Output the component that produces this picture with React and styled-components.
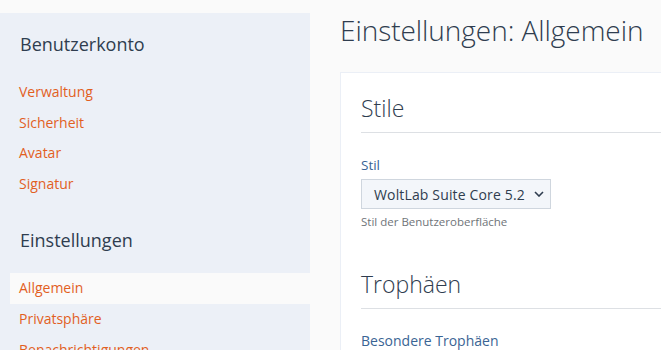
import React from "react";
import styled, { createGlobalStyle } from "styled-components";

const Global = createGlobalStyle`
  html, body { margin: 0; padding: 0; }
  body {
    background: #fafafa;
    font-family: "Open Sans", "Noto Sans", sans-serif;
    overflow: hidden;
    width: 661px;
    height: 350px;
  }
`;

const Page = styled.div`
  display: flex;
  align-items: flex-start;
  padding-top: 13px;
  width: 800px;
`;

const Sidebar = styled.aside`
  width: 310px;
  flex: none;
  background: #ecf0f7;
  padding: 20px 0 20px 10px;
  box-sizing: border-box;
  min-height: 400px;
`;

const Box = styled.section`
  & + & { margin-top: 30px; }
`;

const BoxTitle = styled.h2`
  margin: 0 0 21px;
  padding-left: 10px;
  font-size: 18px;
  font-weight: 400;
  line-height: 23px;
  color: #2f3d4f;
`;

const Menu = styled.ul`
  list-style: none;
  margin: 0;
  padding: 0;
`;

const MenuItem = styled.li`
  padding: 5px 9px;
  line-height: 20.6px;
  font-size: 14px;
  color: #e2601f;
  background: ${(p) => (p.$active ? "#fafafa" : "transparent")};
`;

const Main = styled.main`
  margin-left: 30px;
  width: 460px;
  flex: none;
`;

const Title = styled.h1`
  margin: 0 0 25px;
  font-size: 28px;
  font-weight: 300;
  line-height: 34px;
  color: #2f3d4f;
  letter-spacing: -0.05px;
`;

const Panel = styled.div`
  background: #fff;
  border: 1px solid #ebeff6;
  padding: 20px 20px 20px;
`;

const Section = styled.section`
  & + & { margin-top: 39px; }
`;

const SectionTitle = styled.h2`
  margin: 0 0 22px;
  padding-bottom: 9px;
  border-bottom: 1px solid #dde0e4;
  font-size: 23px;
  font-weight: 300;
  line-height: 30px;
  color: #2f3d4f;
`;

const Label = styled.div`
  font-size: 13.5px;
  line-height: 20px;
  color: #3a6494;
  margin-bottom: 4px;
`;

const Select = styled.div`
  width: 190px;
  height: 30px;
  box-sizing: border-box;
  border: 1px solid #cfd6de;
  background: #f3f6fa;
  display: flex;
  align-items: center;
  justify-content: space-between;
  padding: 0 6px 0 12px;
  font-size: 14px;
  color: #2f3d4f;
  letter-spacing: 0.15px;
`;

const Help = styled.div`
  margin-top: 4px;
  font-size: 11.5px;
  line-height: 17px;
  color: #6f7479;
`;

const FieldLink = styled.div`
  font-size: 14px;
  line-height: 20px;
  color: #3a6494;
`;

export default function App() {
  return (
    <>
      <Global />
      <Page>
        <Sidebar>
          <Box>
            <BoxTitle>Benutzerkonto</BoxTitle>
            <Menu>
              <MenuItem>Verwaltung</MenuItem>
              <MenuItem>Sicherheit</MenuItem>
              <MenuItem>Avatar</MenuItem>
              <MenuItem>Signatur</MenuItem>
            </Menu>
          </Box>
          <Box>
            <BoxTitle>Einstellungen</BoxTitle>
            <Menu>
              <MenuItem $active>Allgemein</MenuItem>
              <MenuItem>Privatsphäre</MenuItem>
              <MenuItem>Benachrichtigungen</MenuItem>
            </Menu>
          </Box>
        </Sidebar>
        <Main>
          <Title>Einstellungen: Allgemein</Title>
          <Panel>
            <Section>
              <SectionTitle>Stile</SectionTitle>
              <Label>Stil</Label>
              <Select>
                <span>WoltLab Suite Core 5.2</span>
                <svg width="10" height="6" viewBox="0 0 10 6">
                  <path d="M1 1l4 4 4-4" fill="none" stroke="#2f3d4f" strokeWidth="1.6" />
                </svg>
              </Select>
              <Help>Stil der Benutzeroberfläche</Help>
            </Section>
            <Section>
              <SectionTitle>Trophäen</SectionTitle>
              <FieldLink>Besondere Trophäen</FieldLink>
            </Section>
          </Panel>
        </Main>
      </Page>
    </>
  );
}
